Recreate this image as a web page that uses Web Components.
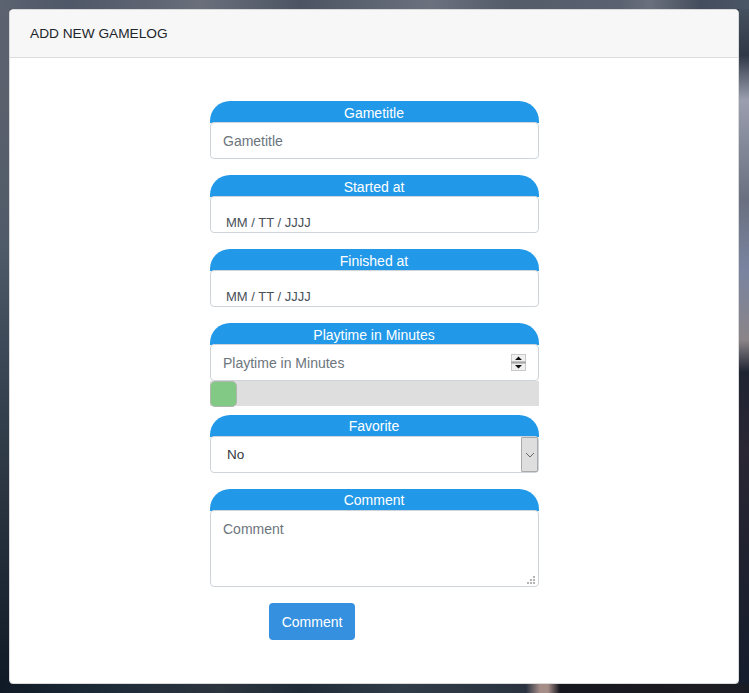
<!DOCTYPE html>
<html>
<head>
<meta charset="utf-8">
<title>Add new gamelog</title>
<style>
  html, body { margin: 0; height: 693px; overflow: hidden; }
  body {
    font-family: "Liberation Sans", Arial, sans-serif;
    background-color: #2c3542;
    background-repeat: no-repeat;
    /* blurred photo behind the card: only the strips round it show */
    background-image:
      linear-gradient(90deg, #101a26 0, #1c2a38 100px, #2c343e 220px, #1f2c38 300px, #303c48 400px, #2a3240 526px, #a58d88 540px, #a58d88 548px, #16161f 560px, #1d1c22 700px, #1a1c24 749px),
      linear-gradient(90deg, #5b6270 0, #4f5868 70px, #5e6472 150px, #6a6f7b 200px, #4c5463 300px, #6b717d 430px, #545b69 510px, #5a6170 620px, #6a707c 650px, #444d5d 700px, #4a5565 749px),
      linear-gradient(180deg, #4a5565 0, #2f3846 55px, #9a9eae 100px, #6a7080 200px, #7a84a0 270px, #8a8488 340px, #1f2433 372px, #2a2633 450px, #141c2c 693px),
      linear-gradient(180deg, #5c6270 0, #5a606c 100px, #4f5a68 250px, #3c4857 350px, #2a3440 500px, #0f1825 693px);
    background-size: 749px 9px, 749px 9px, 10px 693px, 10px 693px;
    background-position: 0 684px, 0 0, 739px 0, 0 0;
  }
  gamelog-card { margin: 9px 10px 9px 9px; }
</style>
</head>
<body>
<gamelog-card title="ADD NEW GAMELOG">
  <log-field label="Gametitle"><log-input placeholder="Gametitle"></log-input></log-field>
  <log-field label="Started at"><log-input value="MM / TT / JJJJ" kind="date"></log-input></log-field>
  <log-field label="Finished at"><log-input value="MM / TT / JJJJ" kind="date"></log-input></log-field>
  <log-field label="Playtime in Minutes" gap="0">
    <log-input placeholder="Playtime in Minutes" kind="number"></log-input>
  </log-field>
  <log-range></log-range>
  <log-field label="Favorite" lift><log-input value="No" kind="select"></log-input></log-field>
  <log-field label="Comment" lift><log-input placeholder="Comment" kind="textarea"></log-input></log-field>
  <log-button>Comment</log-button>
</gamelog-card>

<script>
  class GamelogCard extends HTMLElement {
    connectedCallback() {
      this.attachShadow({ mode: 'open' }).innerHTML = `
        <style>
          :host { display: block; height: 675px; box-sizing: border-box; background: #fff; border: 1px solid #d9d9d9; border-radius: 4px; overflow: hidden; }
          .head { height: 47px; padding-left: 20px; display: flex; align-items: center; background: #f7f7f7; border-bottom: 1px solid #dcdcdc; font-size: 13.7px; color: #212529; }
          .body { padding: 43px 199px 0 200px; }
        </style>
        <div class="head">${this.getAttribute('title')}</div>
        <div class="body"><slot></slot></div>`;
    }
  }

  class LogField extends HTMLElement {
    connectedCallback() {
      const gap = this.getAttribute('gap') || '16';
      this.attachShadow({ mode: 'open' }).innerHTML = `
        <style>
          :host { display: block; margin-bottom: ${gap}px; }
          .label { height: 22px; margin-bottom: -1px; padding-right: 1px; background: #2299e8; border-radius: 20px 20px 0 0; color: #fff; font-size: 14px; line-height: 24px; text-align: center; }
          :host([lift]) .label { line-height: 22px; }
        </style>
        <div class="label">${this.getAttribute('label')}</div>
        <slot></slot>`;
    }
  }

  class LogInput extends HTMLElement {
    connectedCallback() {
      const kind = this.getAttribute('kind') || 'text';
      const placeholder = this.getAttribute('placeholder');
      const text = placeholder || this.getAttribute('value');
      let extra = '';
      if (kind === 'number') {
        extra = `<svg class="spin" width="15" height="17" viewBox="0 0 15 17">
          <rect width="15" height="17" fill="#c9c9c9"/>
          <rect x="1" y="1" width="13" height="6.5" fill="#f0f0f0"/>
          <rect x="1" y="9.5" width="13" height="6.5" fill="#f0f0f0"/>
          <rect x="0" y="7.5" width="15" height="2" fill="#a8a8a8"/>
          <path d="M7.5 2.5L11 6H4z M4 11h7L7.5 14.5z" fill="#111"/>
        </svg>`;
      } else if (kind === 'select') {
        extra = `<div class="arrow"><svg width="10" height="6" viewBox="0 0 10 6"><path d="M1 1l4 4 4-4" fill="none" stroke="#666" stroke-width="1"/></svg></div>`;
      } else if (kind === 'textarea') {
        extra = `<svg class="grip" width="9" height="9" viewBox="0 0 9 9" fill="#b4b4b4">
          <rect x="6" y="0" width="2" height="2"/><rect x="3" y="3" width="2" height="2"/><rect x="6" y="3" width="2" height="2"/>
          <rect x="0" y="6" width="2" height="2"/><rect x="3" y="6" width="2" height="2"/><rect x="6" y="6" width="2" height="2"/>
        </svg>`;
      }
      this.attachShadow({ mode: 'open' }).innerHTML = `
        <style>
          :host { display: block; position: relative; box-sizing: border-box; height: 37px; background: #fff; border: 1px solid #ced4da; border-radius: 4px; font-size: 14px; color: #495057; }
          :host([kind="textarea"]) { height: 77px; }
          .text { display: block; padding: 1px 0 0 12px; line-height: 35px; white-space: nowrap; }
          .ph { color: #6c757d; }
          :host([kind="date"]) .text { padding: 8px 0 0 15px; font-size: 13px; }
          :host([kind="select"]) .text { padding: 0 0 0 16px; font-size: 13.5px; color: #343a40; }
          :host([kind="textarea"]) .text { padding-top: 0; line-height: 36px; }
          .spin { position: absolute; right: 12px; top: 9px; }
          .arrow { box-sizing: border-box; position: absolute; right: 0; top: 0; bottom: 0; width: 17px; display: flex; align-items: center; justify-content: center; background: #dedede; border: 1px solid #aaa; border-radius: 1px; }
          .grip { position: absolute; right: 2px; bottom: 1px; }
        </style>
        <span class="text ${placeholder ? 'ph' : ''}">${text}</span>${extra}`;
    }
  }

  class LogRange extends HTMLElement {
    connectedCallback() {
      this.attachShadow({ mode: 'open' }).innerHTML = `
        <style>
          :host { display: block; height: 26px; margin-bottom: 8px; }
          .track { height: 25px; background: #dedede; }
          .thumb { box-sizing: border-box; width: 27px; height: 26px; background: #82c985; border: 1px solid #b0b8ae; border-radius: 5px; }
        </style>
        <div class="track"><div class="thumb"></div></div>`;
    }
  }

  class LogButton extends HTMLElement {
    connectedCallback() {
      this.attachShadow({ mode: 'open' }).innerHTML = `
        <style>
          :host { display: block; width: 86px; height: 37px; margin-left: 59px; background: #3591df; border-radius: 4px; color: #fff; font-size: 14px; line-height: 38px; text-align: center; }
        </style>
        <slot></slot>`;
    }
  }

  customElements.define('gamelog-card', GamelogCard);
  customElements.define('log-field', LogField);
  customElements.define('log-input', LogInput);
  customElements.define('log-range', LogRange);
  customElements.define('log-button', LogButton);
</script>
</body>
</html>
